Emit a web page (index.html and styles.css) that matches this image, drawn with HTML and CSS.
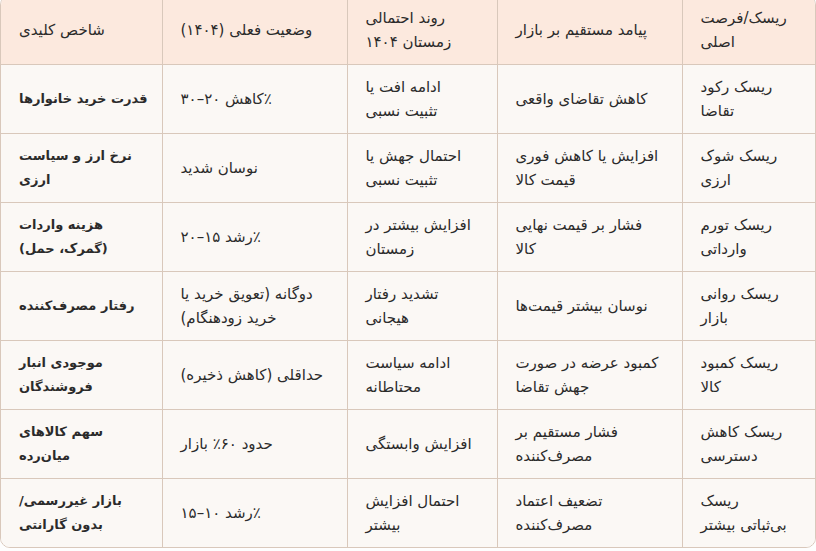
FILE: index.html
```html
<!DOCTYPE html>
<html lang="fa" dir="rtl">
<head>
<meta charset="utf-8">
<link rel="stylesheet" href="styles.css">
</head>
<body>
<div class="wrap">
<table class="grid">
<colgroup>
<col class="c1"><col class="c2"><col class="c3"><col class="c4"><col class="c5">
</colgroup>
<thead>
<tr>
<th>ریسک/فرصت<br>اصلی</th>
<th>پیامد مستقیم بر بازار</th>
<th>روند احتمالی<br>زمستان ۱۴۰۴</th>
<th>وضعیت فعلی (۱۴۰۴)</th>
<th>شاخص کلیدی</th>
</tr>
</thead>
<tbody>
<tr>
<td>ریسک رکود<br>تقاضا</td>
<td>کاهش تقاضای واقعی</td>
<td>ادامه افت یا<br>تثبیت نسبی</td>
<td>٪کاهش ۲۰–۳۰</td>
<td class="key">قدرت خرید خانوارها</td>
</tr>
<tr>
<td>ریسک شوک<br>ارزی</td>
<td>افزایش یا کاهش فوری<br>قیمت کالا</td>
<td>احتمال جهش یا<br>تثبیت نسبی</td>
<td>نوسان شدید</td>
<td class="key">نرخ ارز و سیاست<br>ارزی</td>
</tr>
<tr>
<td>ریسک تورم<br>وارداتی</td>
<td>فشار بر قیمت نهایی<br>کالا</td>
<td>افزایش بیشتر در<br>زمستان</td>
<td>٪رشد ۱۵–۲۰</td>
<td class="key">هزینه واردات<br>(گمرک، حمل)</td>
</tr>
<tr>
<td>ریسک روانی<br>بازار</td>
<td>نوسان بیشتر قیمت‌ها</td>
<td>تشدید رفتار<br>هیجانی</td>
<td>دوگانه (تعویق خرید یا<br>خرید زودهنگام)</td>
<td class="key">رفتار مصرف‌کننده</td>
</tr>
<tr>
<td>ریسک کمبود<br>کالا</td>
<td>کمبود عرضه در صورت<br>جهش تقاضا</td>
<td>ادامه سیاست<br>محتاطانه</td>
<td>حداقلی (کاهش ذخیره)</td>
<td class="key">موجودی انبار<br>فروشندگان</td>
</tr>
<tr>
<td>ریسک کاهش<br>دسترسی</td>
<td>فشار مستقیم بر<br>مصرف‌کننده</td>
<td>افزایش وابستگی</td>
<td>حدود ۶۰٪ بازار</td>
<td class="key">سهم کالاهای<br>میان‌رده</td>
</tr>
<tr>
<td>ریسک<br>بی‌ثباتی بیشتر</td>
<td>تضعیف اعتماد<br>مصرف‌کننده</td>
<td>احتمال افزایش<br>بیشتر</td>
<td>٪رشد ۱۰–۱۵</td>
<td class="key">بازار غیررسمی/<br>بدون گارانتی</td>
</tr>
</tbody>
</table>
</div>
</body>
</html>
```
FILE: styles.css
```css
html, body {
  margin: 0;
  padding: 0;
  background: #fefefe;
}
body {
  font-family: "DejaVu Sans", "Noto Sans", sans-serif;
  color: #2b2b2b;
  font-size: 15px;
}
.wrap {
  width: 816px;
  margin-top: -5px;
  border: 1px solid #d9c8bb;
  border-radius: 10px;
  overflow: hidden;
  box-sizing: border-box;
}
.grid {
  width: 100%;
  border-collapse: collapse;
  table-layout: fixed;
}
.c1 { width: 133px; }
.c2 { width: 185px; }
.c3 { width: 150px; }
.c4 { width: 185px; }
.c5 { width: 161px; }
.grid th, .grid td {
  text-align: left;
  padding: 0 18px;
  line-height: 24px;
  white-space: nowrap;
  border-left: 1px solid #d9c8bb;
  border-bottom: 1px solid #d9c8bb;
  vertical-align: middle;
}
.grid th:last-child, .grid td:last-child {
  border-left: none;
}
.grid tbody tr:last-child td {
  border-bottom: none;
}
.grid th {
  background: #fce9de;
  font-weight: normal;
  height: 68px;
}
.grid td {
  background: #fbf8f5;
  height: 68px;
}
.grid td.key {
  font-weight: bold;
  font-size: 13px;
  padding-left: 18px;
  padding-right: 10px;
}
```
